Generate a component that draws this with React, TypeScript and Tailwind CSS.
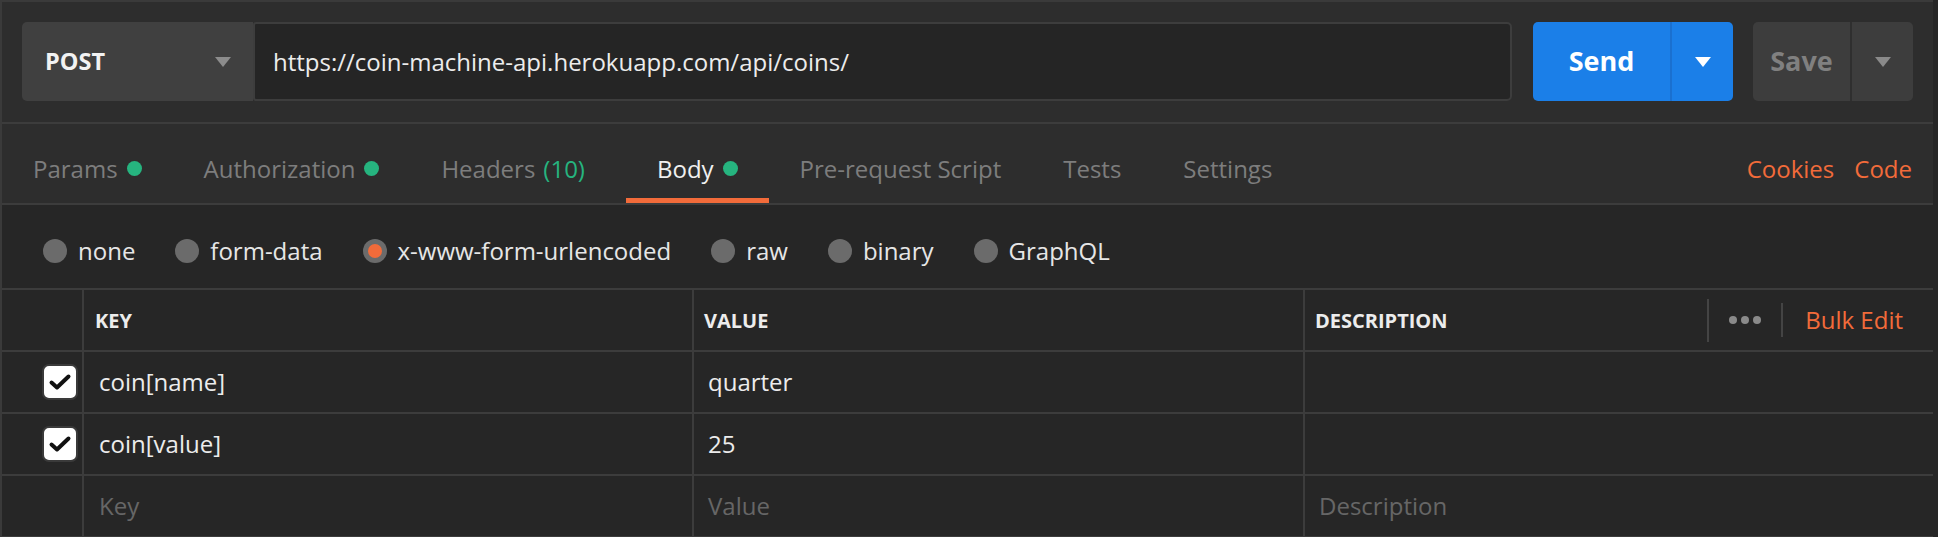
import React from "react";

type Tab = { label: string; dot?: boolean; count?: string; active?: boolean };

const tabs: Tab[] = [
  { label: "Params", dot: true },
  { label: "Authorization", dot: true },
  { label: "Headers", count: "(10)" },
  { label: "Body", dot: true, active: true },
  { label: "Pre-request Script" },
  { label: "Tests" },
  { label: "Settings" },
];

const bodyModes = ["none", "form-data", "x-www-form-urlencoded", "raw", "binary", "GraphQL"];

const rows = [
  { key: "coin[name]", value: "quarter" },
  { key: "coin[value]", value: "25" },
];

function Caret({ color }: { color: string }) {
  return (
    <svg width="16" height="10" viewBox="0 0 16 10">
      <polygon points="0,0 16,0 8,10" fill={color} />
    </svg>
  );
}

function Checkbox() {
  return (
    <div className="flex h-[36px] w-[36px] items-center justify-center rounded-[7px] border-2 border-[#3a3a3a] bg-white">
      <svg width="24" height="18" viewBox="0 0 24 18">
        <path d="M3.5 9.5 L9 14.5 L20.5 3.5" fill="none" stroke="#111" strokeWidth="4" strokeLinecap="round" strokeLinejoin="round" />
      </svg>
    </div>
  );
}

export default function App() {
  return (
    <div className="flex h-[537px] w-[1938px] bg-[#262626] font-['Open_Sans',sans-serif] text-[24px]">
      <div className="flex w-[1933px] flex-col border-l-2 border-t-2 border-[#3a3a3a]">
        {/* request bar */}
        <div className="flex h-[122px] shrink-0 items-start border-b-2 border-[#3c3c3c] bg-[#2d2d2d] px-[20px] pt-[20px]">
          <div className="flex h-[79px] w-[231px] shrink-0 items-center justify-between rounded-l-[5px] bg-[#404040] pl-[23px] pr-[22px]">
            <span className="text-[23.5px] font-bold text-[#f2f2f2]">POST</span>
            <Caret color="#8c8c8c" />
          </div>
          <div className="flex h-[79px] flex-1 items-center rounded-r-[5px] rounded-l-[3px] border-2 border-[#3d3d3d] bg-[#252525] pl-[18px] text-[#ececec]">
            https://coin-machine-api.herokuapp.com/api/coins/
          </div>
          <div className="ml-[21px] flex h-[79px] w-[200px] shrink-0 rounded-[5px] bg-[#1b7fe8]">
            <div className="flex w-[139px] items-center justify-center border-r-2 border-[#1a70d0] text-[27px] font-bold text-white">
              Send
            </div>
            <div className="flex flex-1 items-center justify-center">
              <Caret color="#ffffff" />
            </div>
          </div>
          <div className="ml-[20px] flex h-[79px] w-[160px] shrink-0 rounded-[5px] bg-[#3d3d3d]">
            <div className="flex w-[99px] items-center justify-center border-r-2 border-[#2f2f2f] text-[27px] font-bold text-[#808080]">
              Save
            </div>
            <div className="flex flex-1 items-center justify-center">
              <Caret color="#8a8a8a" />
            </div>
          </div>
        </div>

        {/* tabs */}
        <div className="flex h-[81px] shrink-0 items-stretch border-b-2 border-[#3c3c3c] bg-[#2d2d2d]">
          {tabs.map((t) => (
            <div
              key={t.label}
              className={
                t.active
                  ? "flex items-center gap-[9px] border-b-[5px] border-[#f26b3a] px-[31px] pt-[15px] text-[#f0f0f0]"
                  : t.count
                    ? "flex items-center gap-[9px] border-b-[5px] border-transparent pl-[31px] pr-[41px] pt-[15px] text-[#7d7d7d]"
                    : "flex items-center gap-[9px] border-b-[5px] border-transparent px-[31px] pt-[15px] text-[#7d7d7d]"
              }
            >
              <span>{t.label}</span>
              {t.dot ? <span className="h-[15px] w-[15px] rounded-full bg-[#26b47f]" /> : null}
              {t.count ? <span className="-ml-[1px] text-[#26b47f]">{t.count}</span> : null}
            </div>
          ))}
          <div className="flex-1" />
          <div className="flex items-center gap-[20px] pr-[21px] pt-[10px] text-[#f26b3a]">
            <span>Cookies</span>
            <span>Code</span>
          </div>
        </div>

        {/* body modes */}
        <div className="flex h-[83px] shrink-0 items-center gap-[40px] pl-[41px] pt-[8px] text-[#e6e6e6]">
          {bodyModes.map((m) => (
            <div key={m} className="flex items-center gap-[11px]">
              {m === "x-www-form-urlencoded" ? (
                <span className="flex h-[24px] w-[24px] items-center justify-center rounded-full bg-[#6b6b6b]">
                  <span className="h-[14px] w-[14px] rounded-full bg-[#f26b3a]" />
                </span>
              ) : (
                <span className="h-[24px] w-[24px] rounded-full bg-[#6b6b6b]" />
              )}
              <span>{m}</span>
            </div>
          ))}
        </div>

        {/* table */}
        <div className="flex flex-col border-t-2 border-[#3c3c3c]">
          <div className="flex h-[62px] border-b-2 border-[#3c3c3c]">
            <div className="w-[82px] shrink-0 border-r-2 border-[#3c3c3c]" />
            <div className="flex w-[610px] shrink-0 items-center border-r-2 border-[#3c3c3c] pl-[11px] pt-[2px] text-[20px] font-bold text-[#ececec]">
              KEY
            </div>
            <div className="flex w-[611px] shrink-0 items-center border-r-2 border-[#3c3c3c] pl-[10px] pt-[2px] text-[20px] font-bold text-[#ececec]">
              VALUE
            </div>
            <div className="flex flex-1 items-center pl-[10px]">
              <span className="flex-1 pt-[2px] text-[20px] font-bold text-[#ececec]">DESCRIPTION</span>
              <span className="h-[43px] w-[2px] bg-[#444444]" />
              <span className="flex gap-[4px] px-[20px]">
                <span className="h-[8px] w-[8px] rounded-full bg-[#8a8a8a]" />
                <span className="h-[8px] w-[8px] rounded-full bg-[#8a8a8a]" />
                <span className="h-[8px] w-[8px] rounded-full bg-[#8a8a8a]" />
              </span>
              <span className="h-[34px] w-[2px] bg-[#444444]" />
              <span className="pl-[22px] pr-[30px] text-[#f26b3a]">Bulk Edit</span>
            </div>
          </div>

          {rows.map((r) => (
            <div key={r.key} className="flex h-[62px] border-b-2 border-[#3c3c3c] text-[#ececec]">
              <div className="flex w-[82px] shrink-0 items-center justify-end border-r-2 border-[#3c3c3c] pr-[4px]">
                <Checkbox />
              </div>
              <div className="flex w-[610px] shrink-0 items-center border-r-2 border-[#3c3c3c] pl-[15px]">{r.key}</div>
              <div className="flex w-[611px] shrink-0 items-center border-r-2 border-[#3c3c3c] pl-[14px]">{r.value}</div>
              <div className="flex-1" />
            </div>
          ))}

          <div className="flex h-[62px] border-b-2 border-[#3c3c3c] text-[#666666]">
            <div className="w-[82px] shrink-0 border-r-2 border-[#3c3c3c]" />
            <div className="flex w-[610px] shrink-0 items-center border-r-2 border-[#3c3c3c] pl-[15px]">Key</div>
            <div className="flex w-[611px] shrink-0 items-center border-r-2 border-[#3c3c3c] pl-[14px]">Value</div>
            <div className="flex flex-1 items-center pl-[14px]">Description</div>
          </div>
        </div>
      </div>
    </div>
  );
}
